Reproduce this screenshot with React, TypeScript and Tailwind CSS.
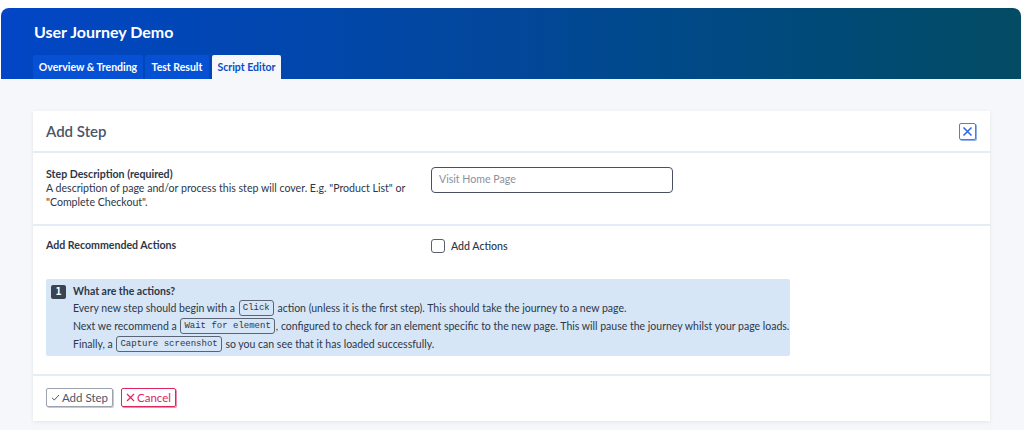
import React from "react";

const Code = ({ children }: { children: React.ReactNode }) => (
  <span className="inline-block align-middle rounded-[3px] border border-[#5a6474] px-[3px] leading-[14px] text-[#2d3748] font-['Liberation_Mono',monospace] text-[9px] mx-[1px] -mt-[2px]">
    {children}
  </span>
);

export default function App() {
  return (
    <div className="w-[1024px] h-[430px] bg-white font-['Lato',sans-serif] text-[#4a5568] overflow-hidden">
      <div className="h-[8px] bg-white" />
      <div className="mx-[1px] w-[1020px] rounded-t-[8px] bg-gradient-to-r from-[#0345c6] via-[#03479a] to-[#044b63] h-[71px] flex flex-col">
        <div className="pl-[33px] pt-[14px] h-[47px] text-white font-bold text-[16px] leading-[20px]">User Journey Demo</div>
        <div className="pl-[32px] flex gap-[2px] text-[10.5px] font-bold leading-none whitespace-nowrap">
          <div className="h-[24px] w-[110px] flex items-center justify-center bg-[#0650d4] text-white rounded-t-[2px]">Overview &amp; Trending</div>
          <div className="h-[24px] w-[64px] flex items-center justify-center bg-[#0650d4] text-white rounded-t-[2px]">Test Result</div>
          <div className="h-[24px] w-[69px] ml-[1px] flex items-center justify-center bg-[#f5f7fa] text-[#0a4bc8] rounded-t-[2px]">Script Editor</div>
        </div>
      </div>
      <div className="bg-[#f5f7fa] h-[351px] pt-[32px] pl-[33px]">
        <div className="w-[957px] bg-white shadow-[0_1px_4px_rgba(0,0,0,0.08)] h-[310px] flex flex-col">
          <div className="h-[42px] border-b-2 border-[#e3edf8] flex items-center justify-between pl-[13px] pr-[14px]">
            <div className="text-[15px] font-semibold text-[#4a5568]">Add Step</div>
            <div className="w-[17px] h-[17px] border border-[#4a7fe0] rounded-[2px] bg-white shadow-[1px_1px_0_#8fb0ee] flex items-center justify-center">
              <svg width="11" height="11" viewBox="0 0 11 11"><path d="M1.5 1.5L9.5 9.5M9.5 1.5L1.5 9.5" stroke="#2f6bdc" strokeWidth="1.6" /></svg>
            </div>
          </div>
          <div className="h-[73px] border-b-2 border-[#e3edf8] flex pl-[13px] pt-[14px]">
            <div className="w-[385px] text-[10.6px] leading-[14px]">
              <div className="font-bold text-[#2d3748]">Step Description (required)</div>
              <div className="text-[#2d3748] pr-[20px]">A description of page and/or process this step will cover. E.g. "Product List" or "Complete Checkout".</div>
            </div>
            <div>
              <div className="w-[242px] h-[26px] border border-[#4a5060] rounded-[4px] flex items-center pl-[7px] text-[10.6px] text-[#8a919c]">Visit Home Page</div>
            </div>
          </div>
          <div className="h-[150px] border-b-2 border-[#e3edf8] pl-[13px] pt-[13px]">
            <div className="flex items-center h-[14px]">
              <div className="w-[385px] text-[10.6px] font-bold text-[#2d3748]">Add Recommended Actions</div>
              <div className="flex items-center gap-[6px]">
                <div className="w-[14px] h-[14px] border border-[#5a6070] rounded-[3px] bg-white" />
                <div className="text-[10.6px] text-[#2d3748] font-medium mt-[1px]">Add Actions</div>
              </div>
            </div>
            <div className="mt-[26px] w-[744px] h-[77px] bg-[#d6e6f6] rounded-[2px] pl-[5px] pt-[6px] flex gap-[7px] text-[10.5px] text-[#2d3748] whitespace-nowrap">
              <div className="w-[15px] h-[14px] shrink-0 bg-[#3b4452] rounded-[2px] text-white text-[10px] font-bold leading-[14px] text-center font-['DejaVu_Sans_Mono',monospace]">1</div>
              <div className="-mt-[2px]">
                <div className="font-bold leading-[16px]">What are the actions?</div>
                <div className="leading-[18px] h-[18px]">Every new step should begin with a <Code>Click</Code> action (unless it is the first step). This should take the journey to a new page.</div>
                <div className="leading-[18px] h-[18px]">Next we recommend a <Code>Wait for element</Code>, configured to check for an element specific to the new page. This will pause the journey whilst your page loads.</div>
                <div className="leading-[18px] h-[18px]">Finally, a <Code>Capture screenshot</Code> so you can see that it has loaded successfully.</div>
              </div>
            </div>
          </div>
          <div className="flex pl-[13px] pt-[12px] gap-[8px]">
            <div className="h-[19px] w-[67px] border border-[#9aa3ae] rounded-[2px] shadow-[1px_1px_0_#c5cbd3] flex items-center justify-center text-[11.5px] text-[#4a5568] gap-[2px]">
              <svg width="9" height="9" viewBox="0 0 9 9"><path d="M1 4.8L3.3 7L8 2" stroke="#4a5568" strokeWidth="1" fill="none" /></svg>
              Add Step
            </div>
            <div className="h-[19px] w-[55px] border border-[#e0245e] rounded-[2px] shadow-[1px_1px_0_#f08aa8] flex items-center justify-center text-[11.5px] text-[#e0245e] gap-[2px]">
              <svg width="9" height="9" viewBox="0 0 9 9"><path d="M1 1L8 8M8 1L1 8" stroke="#e0245e" strokeWidth="1.2" /></svg>
              Cancel
            </div>
          </div>
        </div>
      </div>
    </div>
  );
}
